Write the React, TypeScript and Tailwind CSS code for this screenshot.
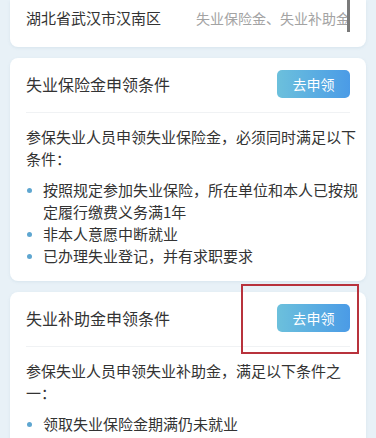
import React from "react";

const font = { fontFamily: '"Noto Sans CJK SC", "Noto Sans", sans-serif' };

function Bullet({ children }: { children: React.ReactNode }) {
  return (
    <li className="flex items-start">
      <span className="flex h-[22px] w-[17px] shrink-0 items-center">
        <span className="ml-[1px] h-[5px] w-[5px] rounded-full bg-[#5ea6d0]" />
      </span>
      <span>{children}</span>
    </li>
  );
}

function Card({
  title,
  intro,
  items,
}: {
  title: string;
  intro: string;
  items: string[];
}) {
  return (
    <div className="rounded-lg bg-white shadow-[0_1px_3px_rgba(120,160,190,0.15)]">
      <div className="mx-4 flex items-center justify-between border-b border-[#f0f2f4] pb-[14px] pt-3">
        <span className="text-[16px] leading-[22px] text-[#333]">{title}</span>
        <button className="flex h-[28px] w-[73px] items-center justify-center rounded-[5px] bg-gradient-to-r from-[#6cc0dc] to-[#4b9be6] text-[14px] text-white">
          去申领
        </button>
      </div>
      <div className="pb-[14px] pl-4 pr-2 pt-[13px] text-[15px] leading-[22px] text-[#333]">
        <p>{intro}</p>
        <ul className="mt-[9px]">
          {items.map((t) => (
            <Bullet key={t}>{t}</Bullet>
          ))}
        </ul>
      </div>
    </div>
  );
}

export default function App() {
  return (
    <div
      className="relative h-[438px] w-[376px] overflow-hidden bg-[#e8f1f7] px-[10px]"
      style={font}
    >
      <div className="flex flex-col gap-[11px]">
        <div className="relative flex items-center justify-between rounded-b-lg bg-white px-4 pb-[18px] pt-[7px] shadow-[0_1px_3px_rgba(120,160,190,0.15)]">
          <span className="text-[15px] leading-[22px] text-[#333]">湖北省武汉市汉南区</span>
          <span className="text-[14px] leading-[22px] text-[#a3a3a3]">失业保险金、失业补助金</span>
          <span className="absolute right-[16px] top-0 h-[32px] w-[3px] bg-[#7a7a7a]" />
        </div>
        <Card
          title="失业保险金申领条件"
          intro="参保失业人员申领失业保险金，必须同时满足以下条件："
          items={[
            "按照规定参加失业保险，所在单位和本人已按规定履行缴费义务满1年",
            "非本人意愿中断就业",
            "已办理失业登记，并有求职要求",
          ]}
        />
        <Card
          title="失业补助金申领条件"
          intro="参保失业人员申领失业补助金，满足以下条件之一："
          items={["领取失业保险金期满仍未就业"]}
        />
      </div>
      <div className="pointer-events-none absolute left-[241px] top-[284px] h-[70px] w-[118px] border-2 border-[#b8323c]" />
    </div>
  );
}
